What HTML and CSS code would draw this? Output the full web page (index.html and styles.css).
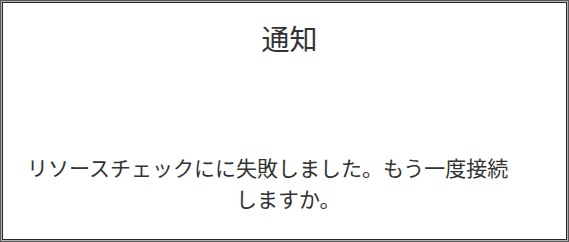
FILE: index.html
```html
<!DOCTYPE html>
<html lang="ja">
<head>
<meta charset="utf-8">
<link rel="stylesheet" href="styles.css">
</head>
<body>
<div class="dialog">
  <div class="title">通知</div>
  <div class="message">
    <div class="line first">リソースチェックにに失敗しました。もう一度接続</div>
    <div class="line second">しますか。</div>
  </div>
</div>
</body>
</html>
```

FILE: styles.css
```css
html, body {
  margin: 0;
  padding: 0;
  background: #ffffff;
}
.dialog {
  width: 569px;
  height: 242px;
  box-sizing: border-box;
  box-shadow: inset 0 0 0 1px #5a5a5a, inset 0 0 0 2px #b5b5b5, inset 0 0 0 3px #262626;
  font-family: "Noto Sans CJK JP", "Noto Sans", sans-serif;
  color: #333333;
  display: flex;
  flex-direction: column;
  padding-top: 24px;
}
.title {
  font-size: 28px;
  line-height: 28px;
  text-align: center;
  padding-left: 10px;
}
.message {
  margin-top: 100px;
  font-size: 21px;
  line-height: 31px;
  display: flex;
  flex-direction: column;
}
.first {
  padding-left: 27px;
}
.second {
  padding-left: 236px;
}
```
